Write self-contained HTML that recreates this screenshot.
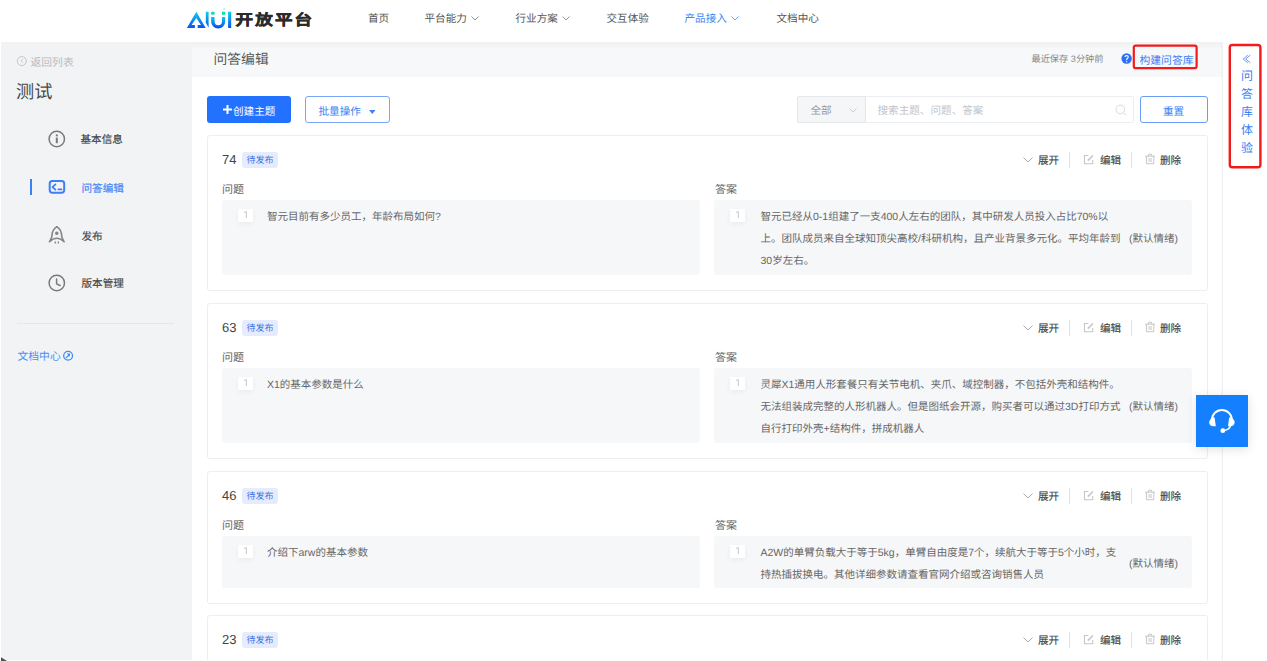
<!DOCTYPE html>
<html lang="zh-CN">
<head>
<meta charset="utf-8">
<style>
*{box-sizing:border-box;margin:0;padding:0}
html,body{width:1267px;height:661px;overflow:hidden;background:#fff;font-family:"Liberation Sans",sans-serif;color:#333;text-rendering:geometricPrecision}
.abs{position:absolute;white-space:nowrap}
svg{position:absolute;overflow:visible}
#nav{position:absolute;left:0;top:0;width:1267px;height:42px;background:#fff}
.navi{position:absolute;top:13px;font-size:10.6px;line-height:12px;color:#555;white-space:nowrap}
#side{position:absolute;left:1px;top:42px;width:190.5px;height:618px;background:#f2f3f5}
#hdr{position:absolute;left:191.5px;top:42px;width:1030.5px;height:34.6px;background:linear-gradient(to bottom,#f1f2f4 0px,#f1f2f4 3px,#f4f5f7 3px,#f4f5f7 6px,#f7f8fa 6px)}
#rp{position:absolute;left:1222px;top:42px;width:45px;height:618px;background:#fff;border-left:1px solid #f0f1f4;box-shadow:-1px 0 1px rgba(0,0,0,0.015)}
.card{position:absolute;left:207px;width:1001px;border:1px solid #eceef2;border-radius:3px;background:#fff}
.num{position:absolute;left:14px;top:16px;font-size:13px;line-height:15px;color:#444}
.tag{position:absolute;left:34px;top:15.6px;width:36px;height:16.5px;background:#e4ecfe;border-radius:3px;color:#3b6fe8;font-size:9px;line-height:17px;text-align:center}
.lbl{position:absolute;top:48px;font-size:11px;line-height:12px;color:#666}
.box{position:absolute;top:64px;background:#f6f7f9;border-radius:3px}
.badge{position:absolute;left:15.5px;top:9px;width:15.5px;height:13px;background:#fff;box-shadow:0 2px 5px rgba(0,0,0,0.05)}
.txt{position:absolute;left:45px;top:6px;font-size:10.5px;line-height:22px;color:#666;white-space:nowrap}
.emo{position:absolute;left:415px;font-size:10.5px;line-height:12px;color:#666;white-space:nowrap}
.ops{position:absolute;left:0;top:16px;height:17px;width:0}
.op{position:absolute;top:3px;white-space:nowrap;font-size:10.6px;line-height:12px;color:#444;-webkit-text-stroke:0.12px #444}
.vsep{position:absolute;top:0;width:1px;height:16px;background:#e0e2e6}
</style>
</head>
<body>
<div id="nav">
  <svg style="left:184px;top:6px" width="52" height="26" viewBox="0 0 52 26">
    <defs>
      <linearGradient id="lg" x1="0" y1="0" x2="0" y2="1"><stop offset="0" stop-color="#0bd0f6"/><stop offset="1" stop-color="#0a52ef"/></linearGradient>
      <linearGradient id="lg2" x1="0" y1="0" x2="0" y2="1"><stop offset="0" stop-color="#0bc8f6"/><stop offset="1" stop-color="#0a46ee"/></linearGradient>
    </defs>
    <path d="M2.9 22 L12.3 5.7 L21.7 22 L13.7 22 L13.7 18.9 L17 18.9 L12.3 11.9 L7.6 18.9 L10.9 18.9 L10.9 22 Z" fill="url(#lg)"/>
    <path d="M21.8 5.7 H24.6 V21.5 L21.8 16.8 Z" fill="url(#lg)"/>
    <path d="M27.1 11.1 H30.6 V15.5 A3.7 3.7 0 0 0 38 15.5 V11.1 H41.2 V15.5 A7.05 7.05 0 0 1 27.1 15.5 Z" fill="url(#lg2)"/>
    <rect x="27.1" y="5.7" width="3.5" height="3.1" rx="0.8" fill="#12dcaa"/>
    <path d="M38 5.7 H41.2 V8.8 H38 Z" fill="#12dcaa"/>
    <path d="M40 2 L41 4 M39 3.5 L41.5 2.8" stroke="#9ff0da" stroke-width="0.7"/>
    <rect x="44.1" y="5.7" width="3.1" height="16.3" fill="url(#lg)"/>
  </svg>
  <div class="abs" style="left:235.5px;top:10.5px;font-size:17.5px;line-height:19px;font-weight:700;color:#2b2b2b;letter-spacing:2.2px;-webkit-text-stroke:0.6px #2b2b2b;transform:scaleY(0.85);transform-origin:0 50%">开放平台</div>
  <div class="navi" style="left:368px">首页</div>
  <div class="navi" style="left:424.5px">平台能力</div>
  <svg style="left:471px;top:16px" width="8" height="5" viewBox="0 0 8 5"><path d="M0.5 0.5 L4 4 L7.5 0.5" fill="none" stroke="#888" stroke-width="0.9"/></svg>
  <div class="navi" style="left:515.5px">行业方案</div>
  <svg style="left:562px;top:16px" width="8" height="5" viewBox="0 0 8 5"><path d="M0.5 0.5 L4 4 L7.5 0.5" fill="none" stroke="#888" stroke-width="0.9"/></svg>
  <div class="navi" style="left:606.5px">交互体验</div>
  <div class="navi" style="left:684.5px;color:#3d86f5">产品接入</div>
  <svg style="left:731px;top:16px" width="8" height="5" viewBox="0 0 8 5"><path d="M0.5 0.5 L4 4 L7.5 0.5" fill="none" stroke="#5d9af5" stroke-width="0.9"/></svg>
  <div class="navi" style="left:776.5px">文档中心</div>
</div>

<div id="side">
  <svg style="left:0;top:0" width="191" height="619" viewBox="1 42 191 619">
    <circle cx="21.8" cy="61.1" r="4.5" fill="none" stroke="#c4c6ca" stroke-width="1"/>
    <path d="M22.7 59.1 L21.2 60.9 L22.7 62.6" fill="none" stroke="#c4c6ca" stroke-width="1"/>
    <circle cx="56.8" cy="139" r="7.7" fill="none" stroke="#7a7a7a" stroke-width="1.5"/>
    <rect x="55.8" y="134.4" width="2" height="2" fill="#7a7a7a"/>
    <rect x="55.8" y="137.6" width="2" height="5.6" fill="#7a7a7a"/>
    <rect x="49.7" y="180.9" width="14.5" height="11.8" rx="2.6" fill="none" stroke="#3d7ff5" stroke-width="2"/>
    <path d="M11.4 10.4 L8.5 13.1 L11.4 15.7" transform="translate(44 174)" fill="none" stroke="#3d7ff5" stroke-width="1.8" stroke-linecap="round" stroke-linejoin="round"/>
    <path d="M58.4 189.3 H61.5" fill="none" stroke="#3d7ff5" stroke-width="1.8" stroke-linecap="round"/>
    <g transform="translate(44 222)" fill="none" stroke="#858585" stroke-width="1.6" stroke-linejoin="round">
      <path d="M12.8 4.6 C9.8 6.6 7.9 10 7.9 14 C7.9 15.6 6.6 17.6 5.5 19.8 C8 17.3 10.3 16.3 12.8 16.3 C15.3 16.3 17.6 17.3 20.1 19.8 C19 17.6 17.7 15.6 17.7 14 C17.7 10 15.8 6.6 12.8 4.6 Z"/>
      <circle cx="12.8" cy="11.3" r="1" fill="#858585"/>
      <path d="M11.3 19.4 V21.5 M14.3 19.4 V21.5" stroke-width="1.3"/>
    </g>
    <circle cx="56.8" cy="283" r="7.7" fill="none" stroke="#7a7a7a" stroke-width="1.5"/>
    <path d="M56.6 278.9 V283.8 L60.1 285.5" fill="none" stroke="#7a7a7a" stroke-width="1.5" stroke-linecap="round" stroke-linejoin="round"/>
    <circle cx="68.1" cy="355.8" r="4.4" fill="none" stroke="#3d8cf7" stroke-width="1.3"/>
    <path d="M65.8 358.1 L69 355" fill="none" stroke="#3d8cf7" stroke-width="1.2"/>
    <path d="M66.8 353.6 L70 353.6 L70 356.8 Z" fill="#3d8cf7"/>
  </svg>
  <div class="abs" style="left:29.5px;top:15px;font-size:10.8px;line-height:12px;color:#b8bbc0">返回列表</div>
  <div class="abs" style="left:15px;top:39.5px;font-size:18.2px;line-height:20px;color:#4a4a4a">测试</div>
  <div class="abs" style="left:79.5px;top:92px;font-size:10.6px;line-height:12px;color:#444;-webkit-text-stroke:0.15px #444">基本信息</div>
  <div class="abs" style="left:28.5px;top:137px;width:2px;height:16px;background:#3d7ff5"></div>
  <div class="abs" style="left:80.5px;top:141px;font-size:10.6px;line-height:12px;color:#4a88f5;-webkit-text-stroke:0.2px #4a88f5">问答编辑</div>
  <div class="abs" style="left:80.5px;top:189px;font-size:10.6px;line-height:12px;color:#444;-webkit-text-stroke:0.15px #444">发布</div>
  <div class="abs" style="left:80.5px;top:236px;font-size:10.6px;line-height:12px;color:#444;-webkit-text-stroke:0.15px #444">版本管理</div>
  <div class="abs" style="left:16px;top:281px;width:157px;height:1px;background:#e6e7ea"></div>
  <div class="abs" style="left:16.5px;top:309px;font-size:10.8px;line-height:12px;color:#4d8ff5">文档中心</div>
</div>

<div id="hdr">
  <div class="abs" style="left:22px;top:10px;font-size:13.8px;line-height:15px;color:#585858">问答编辑</div>
  <div class="abs" style="left:840px;top:12px;font-size:9.2px;line-height:11px;color:#888">最近保存 3分钟前</div>
  <svg style="left:-0.5px;top:0" width="1031" height="34" viewBox="191 42 1031 34">
    <circle cx="1126.6" cy="58.5" r="5.2" fill="#2a6ff5"/>
    <path d="M1124.9 57 C1124.9 55.2 1128.3 55.2 1128.3 57 C1128.3 58.3 1126.6 58.3 1126.6 59.8 V60.3" fill="none" stroke="#fff" stroke-width="1.1"/>
    <rect x="1126.1" y="61.2" width="1.1" height="1.1" fill="#fff"/>
    <rect x="1133.8" y="45.6" width="62.8" height="22.6" rx="2" fill="none" stroke="#f51a1a" stroke-width="2.2"/>
  </svg>
  <div class="abs" style="left:948px;top:12.8px;font-size:10.8px;line-height:12px;color:#3d7ff5">构建问答库</div>
</div>

<div id="rp">
  <svg style="left:-1px;top:0" width="45" height="619" viewBox="1222 42 45 619">
    <rect x="1229.8" y="45" width="30.6" height="122.2" rx="2.5" fill="none" stroke="#f51a1a" stroke-width="2.4"/>
  </svg>
  <svg style="left:-1px;top:0" width="45" height="200" viewBox="1222 42 45 200"><path d="M1247.8 55.2 L1243.2 59 L1247.8 62.8 M1250.3 55.2 L1245.7 59 L1250.3 62.8" fill="none" stroke="#5b8ff5" stroke-width="0.9"/></svg>
  <div class="abs" style="left:14px;top:26px;width:20px;font-size:12px;line-height:17.9px;color:#3d7ff5;text-align:center;white-space:normal">问<br>答<br>库<br>体<br>验</div>
</div>
<div class="abs" style="left:207px;top:96px;width:84px;height:27px;background:#2272ff;border-radius:3px"></div>
<svg style="left:223px;top:105px" width="9" height="9" viewBox="0 0 9 9"><path d="M4.5 0 V9 M0 4.5 H9" stroke="#fff" stroke-width="2"/></svg>
<div class="abs" style="left:233px;top:105.5px;font-size:10.6px;line-height:12px;color:#fff">创建主题</div>
<div class="abs" style="left:305px;top:96px;width:85px;height:27px;border:1px solid #7aa6f8;border-radius:3px;background:#fff"></div>
<div class="abs" style="left:318.5px;top:106px;font-size:10.6px;line-height:12px;color:#3d7ff5">批量操作</div>
<svg style="left:369px;top:109.5px" width="7" height="5" viewBox="0 0 7 5"><path d="M0 0 H6.5 L3.25 4 Z" fill="#3d7ff5"/></svg>
<div class="abs" style="left:797px;top:96px;width:69px;height:27px;border:1px solid #e4e6ea;background:#f5f6f8;border-radius:2px 0 0 2px"></div>
<div class="abs" style="left:810.5px;top:105px;font-size:10.6px;line-height:12px;color:#999">全部</div>
<svg style="left:848.5px;top:108px" width="8" height="5" viewBox="0 0 8 5"><path d="M0.5 0.5 L4 4 L7.5 0.5" fill="none" stroke="#ccc" stroke-width="0.9"/></svg>
<div class="abs" style="left:865px;top:96px;width:269px;height:27px;border:1px solid #eceef1;border-left:none;border-radius:0 2px 2px 0"></div>
<div class="abs" style="left:877.5px;top:105px;font-size:10.6px;line-height:12px;color:#c0c4cc">搜索主题、问题、答案</div>
<svg style="left:0;top:0" width="1267" height="661" viewBox="0 0 1267 661">
  <circle cx="1120.3" cy="109.4" r="4.3" fill="none" stroke="#d8dadf" stroke-width="1"/>
  <path d="M1123.5 112.6 L1126.3 115.4" stroke="#d8dadf" stroke-width="1"/>
</svg>
<div class="abs" style="left:1140px;top:96px;width:68px;height:27px;border:1px solid #6b9cf7;border-radius:3px"></div>
<div class="abs" style="left:1163px;top:105.5px;font-size:10.6px;line-height:12px;color:#3d7ff5;font-weight:500">重置</div>
<div id="cards">
<div class="card" style="top:135px;height:156px">
  <div class="num">74</div><div class="tag">待发布</div>
  <div class="ops"><svg class="abs" style="left:815px;top:5px" width="10" height="6" viewBox="0 0 10 6"><path d="M0.5 0.5 L5 5 L9.5 0.5" fill="none" stroke="#aaa" stroke-width="1"/></svg><div class="op" style="left:830px">展开</div><div class="vsep" style="left:861px"></div><svg class="abs" style="left:875px;top:2px" width="11" height="11" viewBox="0 0 11 11"><path d="M5.3 1.5 H1.5 V9.7 H9.7 V6" fill="none" stroke="#c6c6c6" stroke-width="1.1"/><path d="M4.8 6.6 L9.9 1.5" stroke="#c6c6c6" stroke-width="1.6"/></svg><div class="op" style="left:892px">编辑</div><div class="vsep" style="left:923px"></div><svg class="abs" style="left:937px;top:1px" width="11" height="12" viewBox="0 0 11 12"><path d="M0.2 3.2 H10 M3.5 3.2 V1.3 H6.7 V3.2 M1.4 3.2 V10.7 H8.8 V3.2 M4.1 5 V9 M6.1 5 V9" fill="none" stroke="#c6c6c6" stroke-width="1"/></svg><div class="op" style="left:952px">删除</div></div>
  <div class="lbl" style="left:14px">问题</div><div class="lbl" style="left:507px">答案</div>
  <div class="box" style="left:14px;width:478px;height:74.5px"><div class="badge"><svg style="left:0;top:0" width="16" height="13" viewBox="0 0 16 13"><path d="M8.3 2.3 V9 M8.3 2.3 L6.2 3.7" fill="none" stroke="#c2c2c2" stroke-width="0.95"/></svg></div><div class="txt">智元目前有多少员工，年龄布局如何?</div></div>
  <div class="box" style="left:506px;width:478px;height:74.5px"><div class="badge"><svg style="left:0;top:0" width="16" height="13" viewBox="0 0 16 13"><path d="M8.3 2.3 V9 M8.3 2.3 L6.2 3.7" fill="none" stroke="#c2c2c2" stroke-width="0.95"/></svg></div><div class="txt" style="left:46.5px">智元已经从0-1组建了一支400人左右的团队，其中研发人员投入占比70%以<br>上。团队成员来自全球知顶尖高校/科研机构，且产业背景多元化。平均年龄到<br>30岁左右。</div><div class="emo" style="top:33px">(默认情绪)</div></div>
</div>
<div class="card" style="top:303px;height:156px">
  <div class="num">63</div><div class="tag">待发布</div>
  <div class="ops"><svg class="abs" style="left:815px;top:5px" width="10" height="6" viewBox="0 0 10 6"><path d="M0.5 0.5 L5 5 L9.5 0.5" fill="none" stroke="#aaa" stroke-width="1"/></svg><div class="op" style="left:830px">展开</div><div class="vsep" style="left:861px"></div><svg class="abs" style="left:875px;top:2px" width="11" height="11" viewBox="0 0 11 11"><path d="M5.3 1.5 H1.5 V9.7 H9.7 V6" fill="none" stroke="#c6c6c6" stroke-width="1.1"/><path d="M4.8 6.6 L9.9 1.5" stroke="#c6c6c6" stroke-width="1.6"/></svg><div class="op" style="left:892px">编辑</div><div class="vsep" style="left:923px"></div><svg class="abs" style="left:937px;top:1px" width="11" height="12" viewBox="0 0 11 12"><path d="M0.2 3.2 H10 M3.5 3.2 V1.3 H6.7 V3.2 M1.4 3.2 V10.7 H8.8 V3.2 M4.1 5 V9 M6.1 5 V9" fill="none" stroke="#c6c6c6" stroke-width="1"/></svg><div class="op" style="left:952px">删除</div></div>
  <div class="lbl" style="left:14px">问题</div><div class="lbl" style="left:507px">答案</div>
  <div class="box" style="left:14px;width:478px;height:74.5px"><div class="badge"><svg style="left:0;top:0" width="16" height="13" viewBox="0 0 16 13"><path d="M8.3 2.3 V9 M8.3 2.3 L6.2 3.7" fill="none" stroke="#c2c2c2" stroke-width="0.95"/></svg></div><div class="txt">X1的基本参数是什么</div></div>
  <div class="box" style="left:506px;width:478px;height:74.5px"><div class="badge"><svg style="left:0;top:0" width="16" height="13" viewBox="0 0 16 13"><path d="M8.3 2.3 V9 M8.3 2.3 L6.2 3.7" fill="none" stroke="#c2c2c2" stroke-width="0.95"/></svg></div><div class="txt" style="left:46.5px">灵犀X1通用人形套餐只有关节电机、夹爪、域控制器，不包括外壳和结构件。<br>无法组装成完整的人形机器人。但是图纸会开源，购买者可以通过3D打印方式<br>自行打印外壳+结构件，拼成机器人</div><div class="emo" style="top:33px">(默认情绪)</div></div>
</div>
<div class="card" style="top:471px;height:133px">
  <div class="num">46</div><div class="tag">待发布</div>
  <div class="ops"><svg class="abs" style="left:815px;top:5px" width="10" height="6" viewBox="0 0 10 6"><path d="M0.5 0.5 L5 5 L9.5 0.5" fill="none" stroke="#aaa" stroke-width="1"/></svg><div class="op" style="left:830px">展开</div><div class="vsep" style="left:861px"></div><svg class="abs" style="left:875px;top:2px" width="11" height="11" viewBox="0 0 11 11"><path d="M5.3 1.5 H1.5 V9.7 H9.7 V6" fill="none" stroke="#c6c6c6" stroke-width="1.1"/><path d="M4.8 6.6 L9.9 1.5" stroke="#c6c6c6" stroke-width="1.6"/></svg><div class="op" style="left:892px">编辑</div><div class="vsep" style="left:923px"></div><svg class="abs" style="left:937px;top:1px" width="11" height="12" viewBox="0 0 11 12"><path d="M0.2 3.2 H10 M3.5 3.2 V1.3 H6.7 V3.2 M1.4 3.2 V10.7 H8.8 V3.2 M4.1 5 V9 M6.1 5 V9" fill="none" stroke="#c6c6c6" stroke-width="1"/></svg><div class="op" style="left:952px">删除</div></div>
  <div class="lbl" style="left:14px">问题</div><div class="lbl" style="left:507px">答案</div>
  <div class="box" style="left:14px;width:478px;height:52px"><div class="badge"><svg style="left:0;top:0" width="16" height="13" viewBox="0 0 16 13"><path d="M8.3 2.3 V9 M8.3 2.3 L6.2 3.7" fill="none" stroke="#c2c2c2" stroke-width="0.95"/></svg></div><div class="txt">介绍下arw的基本参数</div></div>
  <div class="box" style="left:506px;width:478px;height:52px"><div class="badge"><svg style="left:0;top:0" width="16" height="13" viewBox="0 0 16 13"><path d="M8.3 2.3 V9 M8.3 2.3 L6.2 3.7" fill="none" stroke="#c2c2c2" stroke-width="0.95"/></svg></div><div class="txt" style="left:46.5px">A2W的单臂负载大于等于5kg，单臂自由度是7个，续航大于等于5个小时，支<br>持热插拔换电。其他详细参数请查看官网介绍或咨询销售人员</div><div class="emo" style="top:22px">(默认情绪)</div></div>
</div>
<div class="card" style="top:615px;height:156px">
  <div class="num">23</div><div class="tag">待发布</div>
  <div class="ops"><svg class="abs" style="left:815px;top:5px" width="10" height="6" viewBox="0 0 10 6"><path d="M0.5 0.5 L5 5 L9.5 0.5" fill="none" stroke="#aaa" stroke-width="1"/></svg><div class="op" style="left:830px">展开</div><div class="vsep" style="left:861px"></div><svg class="abs" style="left:875px;top:2px" width="11" height="11" viewBox="0 0 11 11"><path d="M5.3 1.5 H1.5 V9.7 H9.7 V6" fill="none" stroke="#c6c6c6" stroke-width="1.1"/><path d="M4.8 6.6 L9.9 1.5" stroke="#c6c6c6" stroke-width="1.6"/></svg><div class="op" style="left:892px">编辑</div><div class="vsep" style="left:923px"></div><svg class="abs" style="left:937px;top:1px" width="11" height="12" viewBox="0 0 11 12"><path d="M0.2 3.2 H10 M3.5 3.2 V1.3 H6.7 V3.2 M1.4 3.2 V10.7 H8.8 V3.2 M4.1 5 V9 M6.1 5 V9" fill="none" stroke="#c6c6c6" stroke-width="1"/></svg><div class="op" style="left:952px">删除</div></div>
  <div class="lbl" style="left:14px">问题</div><div class="lbl" style="left:507px">答案</div>
  <div class="box" style="left:14px;width:478px;height:74px"><div class="badge"><svg style="left:0;top:0" width="16" height="13" viewBox="0 0 16 13"><path d="M8.3 2.3 V9 M8.3 2.3 L6.2 3.7" fill="none" stroke="#c2c2c2" stroke-width="0.95"/></svg></div><div class="txt"></div></div>
  <div class="box" style="left:506px;width:478px;height:74px"><div class="badge"><svg style="left:0;top:0" width="16" height="13" viewBox="0 0 16 13"><path d="M8.3 2.3 V9 M8.3 2.3 L6.2 3.7" fill="none" stroke="#c2c2c2" stroke-width="0.95"/></svg></div><div class="txt" style="left:46.5px"></div></div>
</div>
</div>
<div class="abs" style="left:1195.8px;top:394.8px;width:51.8px;height:52.1px;background:#1580ff;box-shadow:0 2px 10px rgba(0,0,0,0.12)"></div>
<svg style="left:1195.8px;top:394.8px" width="52" height="52" viewBox="0 0 52 52">
  <path d="M15.9 25 A10 10 0 0 1 35.9 25" fill="none" stroke="#fff" stroke-width="1.9"/>
  <path d="M17.8 22.4 C15 23 13.2 25 13.2 27.2 C13.2 29.6 15 31.3 17.5 31.3 L19.8 31.3 L18.6 22.6 Z" fill="#fff"/>
  <path d="M34 22.4 C36.8 23 38.6 25 38.6 27.2 C38.6 29.6 36.8 31.3 34.3 31.3 L32 31.3 L33.2 22.6 Z" fill="#fff"/>
  <path d="M34.5 30.8 C33.8 33.2 31 35 28 35.6" fill="none" stroke="#fff" stroke-width="1.5"/>
  <circle cx="26.8" cy="35.7" r="2.4" fill="#fff"/>
</svg>
<div class="abs" style="left:0;top:660px;width:1267px;height:1px;background:#fbfbfc"></div>
<svg style="left:0;top:655px" width="8" height="6" viewBox="0 655 8 6"><path d="M1 657.3 L1 661 L7 661 Z" fill="#333" opacity="0.85"/></svg>
</body></html>
